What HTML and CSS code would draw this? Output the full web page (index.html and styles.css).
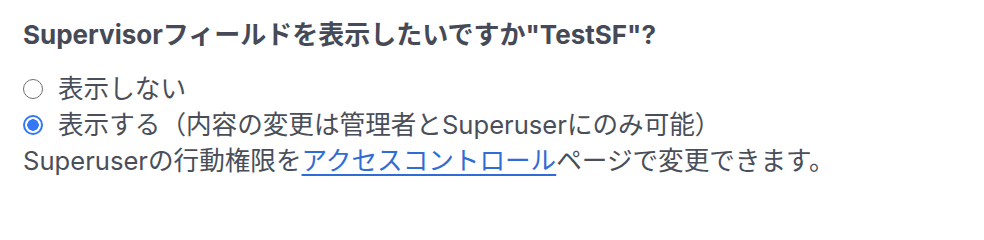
FILE: index.html
```html
<!DOCTYPE html>
<html lang="ja">
<head>
<meta charset="utf-8">
<title>Supervisor</title>
<link rel="stylesheet" href="styles.css">
</head>
<body>
<div class="panel">
  <h2 class="title">Supervisorフィールドを表示したいですか"TestSF"?</h2>
  <div class="options">
    <label class="option"><input type="radio" name="sf" class="radio"><span>表示しない</span></label>
    <label class="option"><input type="radio" name="sf" class="radio" checked><span>表示する（内容の変更は管理者とSuperuserにのみ可能）</span></label>
  </div>
  <p class="note">Superuserの行動権限を<a href="#" class="link">アクセスコントロール</a>ページで変更できます。</p>
</div>
</body>
</html>
```
FILE: styles.css
```css
html, body {
  margin: 0;
  background: #ffffff;
}
.panel {
  padding: 16px 23px;
  font-family: "Inter", "Noto Sans CJK JP", sans-serif;
  font-size: 25.6px;
  line-height: 36px;
  color: #4a4e59;
}
.title {
  margin: 0;
  font-size: 26px;
  font-weight: 700;
  line-height: 38px;
  color: #454a56;
}
.options {
  margin-top: 17px;
  display: flex;
  flex-direction: column;
}
.option {
  display: flex;
  align-items: center;
  gap: 15px;
  height: 36px;
}
.radio {
  appearance: none;
  -webkit-appearance: none;
  margin: 0;
  width: 20px;
  height: 20px;
  border-radius: 50%;
  border: 1.5px solid #6f6f6f;
  box-sizing: border-box;
  background: #fff;
  flex: none;
}
.radio:checked {
  border: 2px solid #3478f6;
  background: radial-gradient(circle, #3478f6 0 5.5px, #ffffff 6px);
}
.note {
  margin: 0;
}
.link {
  color: #2f6cd6;
  text-decoration: underline;
  text-underline-offset: 4px;
}
```
